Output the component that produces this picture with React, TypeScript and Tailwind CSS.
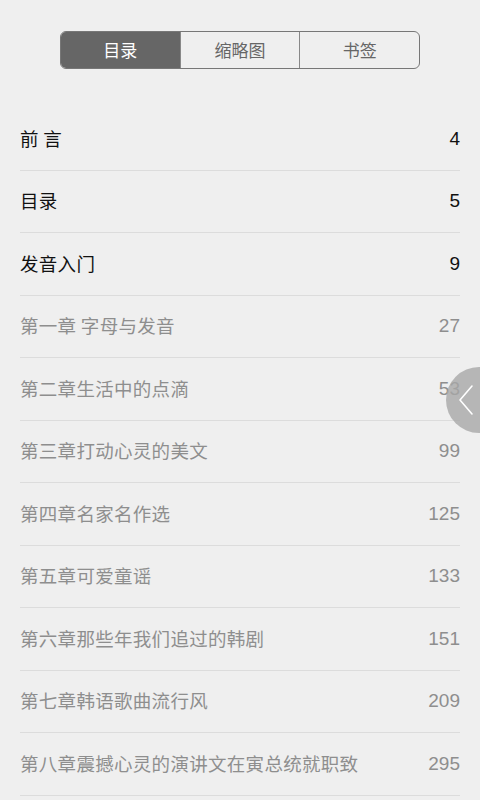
const items: { title: string; page: number; strong?: boolean }[] = [
  { title: '前 言', page: 4, strong: true },
  { title: '目录', page: 5, strong: true },
  { title: '发音入门', page: 9, strong: true },
  { title: '第一章 字母与发音', page: 27 },
  { title: '第二章生活中的点滴', page: 53 },
  { title: '第三章打动心灵的美文', page: 99 },
  { title: '第四章名家名作选', page: 125 },
  { title: '第五章可爱童谣', page: 133 },
  { title: '第六章那些年我们追过的韩剧', page: 151 },
  { title: '第七章韩语歌曲流行风', page: 209 },
  { title: '第八章震撼心灵的演讲文在寅总统就职致', page: 295 },
]

const tabs = ['目录', '缩略图', '书签']

export default function App() {
  return (
    <div
      className="relative h-[800px] w-[480px] overflow-hidden bg-[#efefef]"
      style={{ fontFamily: '"Noto Sans CJK SC", "Liberation Sans", sans-serif' }}
    >
      <div className="flex justify-center pt-[31px]">
        <div className="flex h-[38px] w-[360px] overflow-hidden rounded-[6px] border border-[#777]">
          {tabs.map((t, i) => (
            <div
              key={t}
              className={
                i === 0
                  ? 'flex flex-1 items-center justify-center bg-[#666] text-[17px] text-white'
                  : 'flex flex-1 items-center justify-center border-l border-[#888] text-[17px] text-[#666]'
              }
            >
              {t}
            </div>
          ))}
        </div>
      </div>

      <div className="mt-[39px] px-5">
        {items.map((it) => (
          <div
            key={it.title}
            className="flex h-[62.5px] items-center justify-between border-b border-[#dcdcdc]"
          >
            <span
              className={
                it.strong
                  ? 'text-[18.5px] tracking-[0.3px] text-[#111]'
                  : 'text-[18.5px] tracking-[0.3px] text-[#8e8e8e]'
              }
            >
              {it.title}
            </span>
            <span
              className={it.strong ? 'text-[19px] text-[#111]' : 'text-[19px] text-[#8e8e8e]'}
              style={{ fontFamily: '"Liberation Sans", sans-serif' }}
            >
              {it.page}
            </span>
          </div>
        ))}
      </div>

      <div className="absolute left-[446px] top-[367px] flex h-[66px] w-[66px] items-center rounded-full bg-[#a8a8a8]/80 pl-[12px]">
        <svg width="16" height="32" viewBox="0 0 16 32" fill="none">
          <path d="M14 2 L2 16 L14 30" stroke="#fff" strokeWidth="1.6" strokeLinecap="round" strokeLinejoin="round" />
        </svg>
      </div>
    </div>
  )
}
